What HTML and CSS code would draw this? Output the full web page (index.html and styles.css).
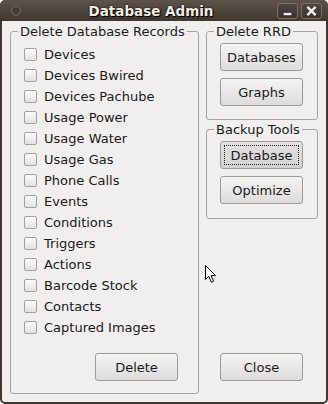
FILE: index.html
```html
<!DOCTYPE html>
<html>
<head>
<meta charset="utf-8">
<link rel="stylesheet" href="styles.css">
</head>
<body>
<div class="window">
  <div class="titlebar">
    <span class="menu-dot"></span>
    <span class="title">Database Admin</span>
    <div class="wbtns">
      <span class="wbtn"><svg width="20" height="16" viewBox="0 0 20 16"><rect x="6" y="10" width="8" height="2.4" fill="#f2efe9"/></svg></span>
      <span class="wbtn"><svg width="20" height="16" viewBox="0 0 20 16"><path d="M6.5 4.5 L13.5 11.5 M13.5 4.5 L6.5 11.5" stroke="#f2efe9" stroke-width="2.4" stroke-linecap="square"/></svg></span>
    </div>
  </div>
  <div class="content">
    <fieldset class="records">
      <legend>Delete Database Records</legend>
      <ul class="checks">
        <li><span class="box"></span>Devices</li>
        <li><span class="box"></span>Devices Bwired</li>
        <li><span class="box"></span>Devices Pachube</li>
        <li><span class="box"></span>Usage Power</li>
        <li><span class="box"></span>Usage Water</li>
        <li><span class="box"></span>Usage Gas</li>
        <li><span class="box"></span>Phone Calls</li>
        <li><span class="box"></span>Events</li>
        <li><span class="box"></span>Conditions</li>
        <li><span class="box"></span>Triggers</li>
        <li><span class="box"></span>Actions</li>
        <li><span class="box"></span>Barcode Stock</li>
        <li><span class="box"></span>Contacts</li>
        <li><span class="box"></span>Captured Images</li>
      </ul>
      <div class="left-actions">
        <button class="btn">Delete</button>
      </div>
    </fieldset>
    <div class="side">
      <fieldset class="group rrd">
        <legend>Delete RRD</legend>
        <button class="btn">Databases</button>
        <button class="btn">Graphs</button>
      </fieldset>
      <fieldset class="group backup">
        <legend>Backup Tools</legend>
        <button class="btn focused"><span class="focus">Database</span></button>
        <button class="btn">Optimize</button>
      </fieldset>
      <div class="side-actions">
        <button class="btn">Close</button>
      </div>
    </div>
  </div>
  <svg class="cursor" width="14" height="20" viewBox="0 0 14 20">
    <path d="M1.5 1.5 L1.5 15.5 L4.8 12.4 L7.4 18.3 L9.6 17.3 L7.1 11.6 L11.6 11.6 Z" fill="#ffffff" stroke="#000000" stroke-width="1" stroke-linejoin="miter"/>
  </svg>
</div>
</body>
</html>
```

FILE: styles.css
```css
* { box-sizing: border-box; }
html, body { margin: 0; padding: 0; background: #ffffff; }
body {
  width: 328px;
  height: 404px;
  overflow: hidden;
  font-family: "DejaVu Sans", "Liberation Sans", sans-serif;
  font-size: 13px;
  color: #1a1a1a;
}
.window {
  position: relative;
  width: 328px;
  height: 404px;
  background: #3e3631;
  border-radius: 6px 6px 5px 5px;
  padding: 0 2px 2px 2px;
  display: flex;
  flex-direction: column;
}
.titlebar {
  height: 21px;
  display: flex;
  align-items: center;
  position: relative;
  background: linear-gradient(#5e534b, #40372f);
  border-radius: 5px 5px 0 0;
  margin: 0 -2px;
  padding: 0 6px 0 10px;
}
.menu-dot {
  width: 10px;
  height: 10px;
  margin-left: 1px;
  border-radius: 50%;
  border: 1px solid #756b62;
  background: linear-gradient(#3e3630, #4d443d);
}
.title {
  flex: 1;
  text-align: center;
  color: #f1ece3;
  font-weight: bold;
  font-size: 13.5px;
  text-shadow: 0 0 2px #000, 1px 1px 1px #000;
  padding-left: 4px;
}
.wbtns { display: flex; gap: 3px; margin-top: 1px; }
.wbtn {
  width: 21px;
  height: 16px;
  border: 1px solid #7a7067;
  border-radius: 3px;
  background: linear-gradient(#4e4640, #3a332e);
  display: flex;
  align-items: center;
  justify-content: center;
}
.wbtn svg { display: block; }
.content {
  flex: 1;
  background: #f0efee;
  display: flex;
  gap: 7px;
  padding: 3px 9px 8px 8px;
  border-radius: 0 0 3px 3px;
}
fieldset {
  margin: 0;
  border: 1px solid #a6a39f;
  border-radius: 3px;
  min-width: 0;
}
legend {
  padding: 0 2px;
  margin-left: -6px;
  line-height: 15px;
  color: #1a1a1a;
  white-space: nowrap;
}
.records {
  width: 189px;
  flex: none;
  padding: 5px 0 12px 13px;
  display: flex;
  flex-direction: column;
}
.checks {
  list-style: none;
  margin: 0;
  padding: 0;
}
.checks li {
  height: 21px;
  display: flex;
  align-items: center;
  gap: 7px;
  white-space: nowrap;
}
.box {
  width: 13px;
  height: 13px;
  border: 1px solid #a3a09c;
  border-radius: 2px;
  background: linear-gradient(#fbfbfa, #e3e2e0);
  flex: none;
}
.left-actions {
  margin-top: auto;
  display: flex;
  justify-content: flex-end;
  padding-right: 20px;
}
.side {
  width: 112px;
  flex: none;
  display: flex;
  flex-direction: column;
}
.group {
  padding: 4px 13px 0 13px;
  display: flex;
  flex-direction: column;
  gap: 7px;
}
.rrd { height: 96px; }
.backup { height: 97px; margin-top: 2px; }
.btn {
  width: 83px;
  height: 28px;
  flex: none;
  font-family: inherit;
  font-size: 13px;
  color: #1a1a1a;
  border: 1px solid #9e9b97;
  border-radius: 3px;
  background: linear-gradient(#f4f4f3, #dddcda);
  padding: 0;
  display: flex;
  align-items: center;
  justify-content: center;
}
.btn.focused {
  background: linear-gradient(#e4e3e1, #d3d2d0);
  padding: 3px;
}
.focus {
  flex: 1;
  align-self: stretch;
  border: 1px dotted #222;
  display: flex;
  align-items: center;
  justify-content: center;
}
.side-actions {
  margin-top: auto;
  padding-left: 14px;
  padding-bottom: 13px;
}
.cursor {
  position: absolute;
  left: 204px;
  top: 264px;
}
```
